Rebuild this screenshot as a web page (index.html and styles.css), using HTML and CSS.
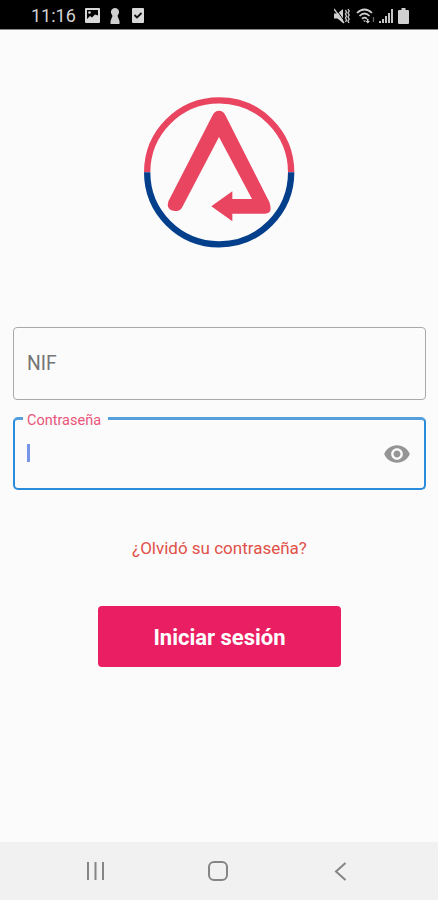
FILE: index.html
```html
<!DOCTYPE html>
<html lang="es">
<head>
    <meta charset="UTF-8">
    <meta name="viewport" content="width=device-width, initial-scale=1.0">
    <title>Iniciar sesión</title>
    <link rel="stylesheet" href="styles.css">
</head>
<body>
    <header class="status-bar">
        <div class="status-left">
            <span class="clock">11:16</span>
            <svg class="icon-image" width="15" height="15" viewBox="0 0 15 15">
                <path fill="#d8d8d8" fill-rule="evenodd" d="M1 0h13q1 0 1 1v13q0 1-1 1H1q-1 0-1-1V1q0-1 1-1zM2 2v9l3-3 2 1.500 3-3 3 1V2z"/>
                <circle cx="4.500" cy="4.500" r="1.300" fill="#d8d8d8"/>
            </svg>
            <svg class="icon-key" width="10" height="16" viewBox="0 0 10 16">
                <path fill="#d0d0d0" d="M5 0a4 4 0 0 1 3.500 6L7.500 8 9.500 13v3h-9v-3l2-5L1.500 6A4 4 0 0 1 5 0z"/>
            </svg>
            <svg class="icon-check" width="12" height="15" viewBox="0 0 12 15">
                <rect width="12" height="15" rx="1" fill="#d8d8d8"/>
                <path d="M2.500 7l2.500 2.500L9.500 5" fill="none" stroke="#111" stroke-width="1.800"/>
            </svg>
        </div>
        <div class="status-right">
            <svg width="16" height="16" viewBox="0 0 16 16">
                <path fill="#d0d0d0" d="M0 5.500h3.500L9 1v14l-5.500-4.500H0z"/>
                <path d="M2 1l9 13" stroke="#000" stroke-width="1"/>
                <path d="M0 1l10 14" stroke="#d0d0d0" stroke-width="1.300"/>
                <path d="M11.500 2l1 2-1 2 1 2-1 2 1 2-1 2M14 1l1.200 2L14 5l1.200 2L14 9l1.200 2L14 13l1 2" fill="none" stroke="#c4c4c4" stroke-width="1.400"/>
            </svg>
            <svg class="icon-wifi" width="20" height="16" viewBox="0 0 20 16">
                <g fill="none" stroke="#cfcfcf" stroke-width="1.700">
                    <path d="M1 5Q8.500-2 16 5"/>
                    <path d="M3.500 8Q8.500 3 13.500 8"/>
                    <path d="M6 10.800Q8.500 8.500 11 10.800"/>
                </g>
                <path fill="#cfcfcf" d="M7 12.500h3L8.500 14zM11 11h1.500v2H14l-2.200 2.500L9.500 13H11z"/>
                <path d="M17.500 9v5" stroke="#666" stroke-width="1.300"/>
            </svg>
            <svg width="14" height="16" viewBox="0 0 14 16">
                <path fill="#c4c4c4" d="M0 13h2v2H0zM3 11h2v4H3zM6 8h2v7H6zM9 5h2v10H9zM12 1h2v14h-2z"/>
            </svg>
            <svg class="icon-battery" width="11" height="16" viewBox="0 0 11 16">
                <path fill="#d0d0d0" d="M3.500 0h4v2H10q1 0 1 1v12q0 1-1 1H1q-1 0-1-1V3q0-1 1-1h2.500z"/>
            </svg>
        </div>
    </header>

    <main class="login">
        <svg class="logo" width="170" height="170" viewBox="0 0 510 510">
            <g fill="none" stroke-width="19">
                <path d="M39.500 256a216 216 0 0 1 432 0" stroke="#e94560"/>
                <path d="M39.500 256a216 216 0 0 0 432 0" stroke="#043f8c"/>
            </g>
            <path fill="#e94560" d="M104 341L235 86Q242 71 255 71Q268 71 275 86L406 345Q418 380 393 380H295V403L232 358L295 313V336H354L255 150L145 360Q139 372 127 372H121Q94 368 104 341Z"/>
        </svg>

        <form class="login-form">
            <div class="field">
                <span class="placeholder">NIF</span>
            </div>
            <div class="field field-active">
                <span class="field-label">Contraseña</span>
                <span class="caret"></span>
                <svg class="eye" width="28" height="28" viewBox="0 0 24 24">
                    <path fill="#959595" d="M12 4.500C7 4.500 2.730 7.610 1 12c1.730 4.390 6 7.500 11 7.500s9.270-3.110 11-7.500c-1.730-4.390-6-7.500-11-7.500zM12 17c-2.760 0-5-2.240-5-5s2.240-5 5-5 5 2.240 5 5-2.240 5-5 5zm0-8c-1.660 0-3 1.340-3 3s1.340 3 3 3 3-1.340 3-3-1.340-3-3-3z"/>
                </svg>
            </div>
        </form>

        <a class="forgot">¿Olvidó su contraseña?</a>
        <button class="submit" type="button">Iniciar sesión</button>
    </main>

    <nav class="nav-bar">
        <svg width="20" height="20" viewBox="0 0 20 20">
            <path d="M3 1v18M10.500 1v18M18 1v18" stroke="#858585" stroke-width="2"/>
        </svg>
        <svg width="22" height="22" viewBox="0 0 22 22">
            <rect x="2" y="2" width="18" height="18" rx="5" fill="none" stroke="#858585" stroke-width="2"/>
        </svg>
        <svg width="20" height="20" viewBox="0 0 20 20">
            <path d="M15.500 2L6 10.500l9.500 8.500" fill="none" stroke="#858585" stroke-width="2"/>
        </svg>
    </nav>
</body>
</html>
```
FILE: styles.css
```css
* { box-sizing: border-box; }
body { margin: 0; height: 900px; display: flex; flex-direction: column; font-family: Roboto, sans-serif; background-color: #fbfbfb; overflow: hidden; }
svg { display: block; flex: none; }

.status-bar { height: 30px; padding: 2px 29px 0 31px; display: flex; justify-content: space-between; align-items: center; background-color: #000; border-bottom: 1px solid #8a8586; }
.status-left, .status-right { display: flex; align-items: center; }
.clock { width: 54px; font-size: 18px; line-height: 20px; color: #d2d2d2; padding-top: 1px; }
.icon-key { margin: 0 12px 0 10px; }
.icon-wifi { margin: 0 3px 0 6px; }
.icon-battery { margin-left: 5px; }

.login { flex: 1; display: flex; flex-direction: column; align-items: center; padding: 57px 12px 0 13px; }
.logo { margin-right: 2px; }
.login-form { width: 100%; margin-top: 70px; }
.field { position: relative; height: 73px; padding: 0 13px; display: flex; align-items: center; justify-content: space-between; border: 1px solid #a9a9a9; border-radius: 4px; }
.field-active { margin-top: 17px; border: 2px solid #2b8cdc; border-top: 3px solid #559fdd; border-radius: 5px; }
.placeholder { font-size: 19.3px; color: #757575; }
.field-label { position: absolute; top: -8px; left: 8px; width: 85px; padding-left: 4px; font-size: 14.5px; line-height: 17px; background-color: #fbfbfb; color: #e9557a; }
.caret { width: 3px; height: 18px; margin-top: -3px; margin-left: -1px; background-color: #7795e6; }

.forgot { margin-top: 47px; font-size: 17px; line-height: 22px; color: #e05048; }
.submit { width: 243px; height: 61px; margin-top: 47px; padding: 2px 0 0; border: none; border-radius: 4px; background-color: #e91e63; color: #fff; font-family: inherit; font-size: 22px; font-weight: bold; }

.nav-bar { height: 58px; display: flex; align-items: center; justify-content: space-between; padding: 0 88px 0 85px; background-color: #f1f1f1; }
```
